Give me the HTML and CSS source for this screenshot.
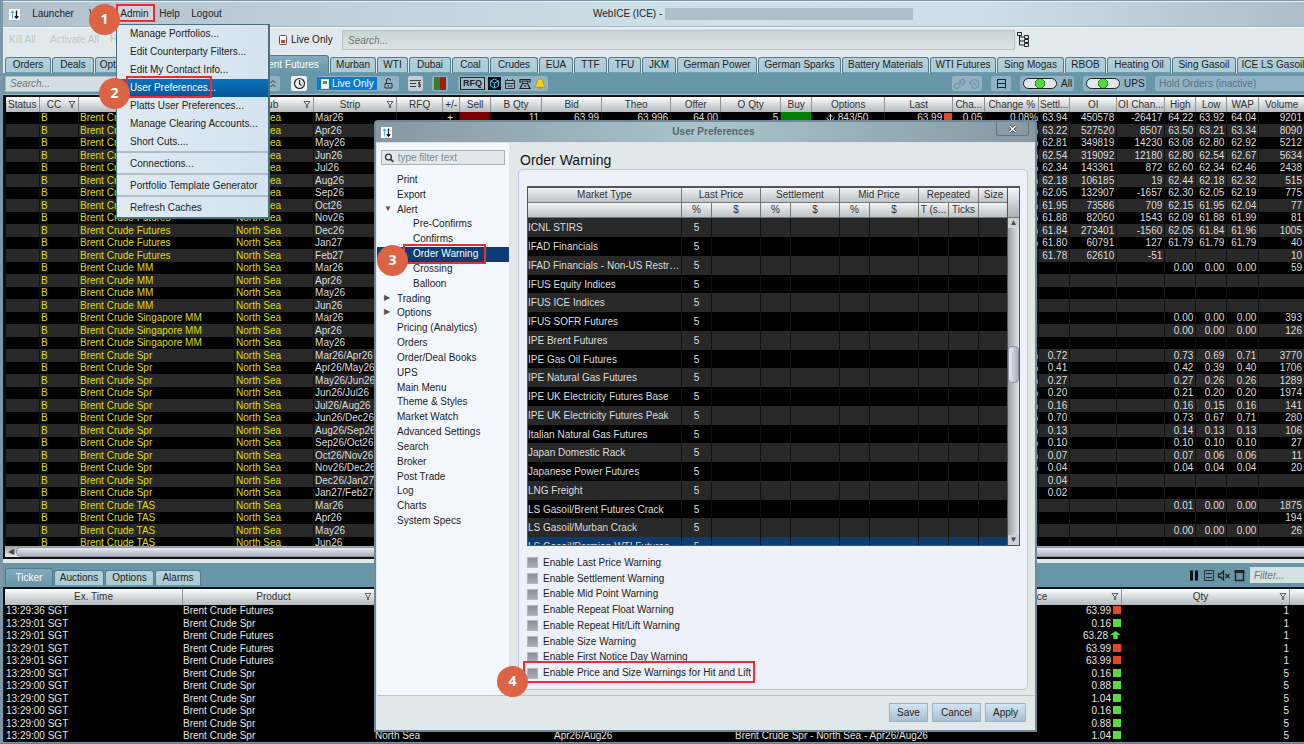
FILE: index.html
```html
<!DOCTYPE html>
<html lang="en">
<head>
<meta charset="utf-8">
<title>WebICE (ICE)</title>
<link rel="stylesheet" href="styles.css">
</head>
<body>
<svg class="defs" width="0" height="0" aria-hidden="true">
  <symbol id="funnel" viewBox="0 0 8 8"><path d="M1 1h6L4.600 4.200V7h-1.200V4.200z" fill="none" stroke="#444" stroke-width=".8"/></symbol>
  <symbol id="logo" viewBox="0 0 11 11"><path d="M0 0h11v11H0z" fill="#fff"/><path d="M3.500 9.500V2M1.800 3.800 3.500 2l1.700 1.800" stroke="#5fb4e4" stroke-width="1.200" fill="none"/><path d="M7.500 1.500V9M5.700 7.200 7.500 9l1.800-1.800" stroke="#111" stroke-width="1.300" fill="none"/></symbol>
</svg>
<div class="app">
  <header class="titlebar">
    <svg class="logo"><use href="#logo"/></svg>
    <nav class="menubar">
      <button>Launcher</button><button>View</button><button class="open">Admin</button><button>Help</button><button>Logout</button>
    </nav>
    <div class="apptitle">WebICE (ICE) - <span class="redacted"></span></div>
  </header>

  <div class="toolbar">
    <button class="ghost" disabled>Kill All</button>
    <button class="ghost" disabled>Activate All</button>
    <button class="ghost hold" disabled>Hold All</button>
    <button class="live"><svg width="8" height="11" viewBox="0 0 8 11"><rect x=".5" y=".5" width="7" height="9" rx="1" fill="#fff" stroke="#555"/><path d="M2 5h4v3H2z" fill="#e04030"/></svg>Live Only</button>
    <input class="search-main" type="text" placeholder="Search..." aria-label="Search">
    <svg class="hier" width="13" height="18" viewBox="0 0 13 18" fill="none" stroke="#222"><path d="M.5 1.500h4v3h-4zM7.500 4.500h4v3h-4zM7.500 8.500h4v3h-4zM7.500 12.500h4v3h-4zM2.500 4.500v9.500h5M2.500 6h5M2.500 10h5"/></svg>
  </div>

  <nav class="tabs main-tabs">
    <button>Orders</button><button>Deals</button><button>Options</button><span></span><button class="active">Brent Futures</button><button>Murban</button><button>WTI</button><button>Dubai</button><button>Coal</button><button>Crudes</button><button>EUA</button><button>TTF</button><button>TFU</button><button>JKM</button><button>German Power</button><button>German Sparks</button><button>Battery Materials</button><button>WTI Futures</button><button>Sing Mogas</button><button>RBOB</button><button>Heating Oil</button><button>Sing Gasoil</button><button>ICE LS Gasoil</button>
  </nav>

  <div class="band">
    <input class="search-grid" type="text" placeholder="Search..." aria-label="Search markets">
    <button class="chip up" aria-label="Collapse"><svg width="8" height="9" viewBox="0 0 8 9" fill="none" stroke="#333"><path d="M1.500 4 4 1.500 6.500 4M1.500 8 4 5.500 6.500 8"/></svg></button>
    <button class="chip clock" aria-label="History"><svg width="13" height="13" viewBox="0 0 13 13" fill="none" stroke="#222" stroke-width="1.200"><circle cx="6.500" cy="6.500" r="5"/><path d="M6.500 3v4l2 1.500"/></svg></button>
    <div class="chip livegroup">
      <button class="liveon"><svg width="8" height="10" viewBox="0 0 8 10"><rect x=".5" y=".5" width="7" height="9" fill="#fff" stroke="#dfe8df"/><path d="M2 2h4v3H2z" fill="#3fae3f"/></svg>Live Only</button>
      <button class="lock" aria-label="Lock"><svg width="9" height="11" viewBox="0 0 9 11" fill="none" stroke="#333"><path d="M1 5.500h7v4.500H1zM2.500 5V2.500a2 2 0 0 1 4 0M4.500 7v1.500"/></svg></button>
    </div>
    <button class="chip list" aria-label="Prices"><svg width="13" height="11" viewBox="0 0 13 11" fill="none" stroke="#444"><path d="M1 2.500h11M1 5.500h6M1 8.500h6"/><path d="M11.500 4.500H9.500v2h2v2H9M10.500 3.500v6" stroke-width=".9"/></svg></button>
    <button class="chip colours" aria-label="Colours"><span class="g"></span><span class="r"></span></button>
    <div class="chip tools">
      <button class="rfq">RFQ</button>
      <button aria-label="Block"><svg width="13" height="13" viewBox="0 0 13 13"><path d="M0 0h13v13H0z" fill="#0b0f14"/><path d="M6.500 2 10.500 4v5l-4 2.200L2.500 9V4zM2.500 4l4 2 4-2M6.500 6v5" fill="none" stroke="#35b8d8"/></svg></button>
      <button aria-label="Calendar"><svg width="12" height="12" viewBox="0 0 12 12" fill="none" stroke="#333"><path d="M1.500 2.500h9v8h-9zM1.500 5.500h9M3.500 1v2M8.500 1v2M3.500 8h5"/></svg></button>
      <button aria-label="Phone"><svg width="12" height="12" viewBox="0 0 12 12" fill="none" stroke="#222" stroke-width="1.200"><path d="M1 4V1.500h10V4H8.500V3h-5v1zM3.500 5.500h5l2.500 5H1zM4.500 8h3"/></svg></button>
      <button aria-label="Alerts"><svg width="12" height="12" viewBox="0 0 12 12"><path d="M6 1c-2.500 0-3.300 2-3.300 4.200C2.700 7.500 1 8 1 9.300h10C11 8 9.300 7.500 9.300 5.200 9.300 3 8.500 1 6 1z" fill="#f3cf22" stroke="#b38a10" stroke-width=".7"/><path d="M4.800 10.200h2.400" stroke="#b38a10" stroke-width="1.500"/></svg></button>
    </div>
    <div class="band-right">
      <div class="chip linkgroup"><svg width="28" height="12" viewBox="0 0 28 12" fill="none" stroke="#7890a0" stroke-width="1.200"><path d="M5 7 8.500 3.500M4.500 4.500 2 7a2 2 0 0 0 3 3l2-2M6 4l2-2a2 2 0 0 1 3 3L8.500 7.500M17 3v3h3M17.300 5.500A4.300 4.300 0 1 1 18 8.500M21.500 3.500V6.500l2 1"/></svg></div>
      <button class="chip split" aria-label="Split"><svg width="11" height="11" viewBox="0 0 11 11" fill="none" stroke="#222"><path d="M1.500 1v9.500M9.500 1v9.500M1.500 1.500h8M1.500 5.500h8M1.500 9.500h8"/></svg></button>
      <label class="chip toggle all"><input type="checkbox" checked><span class="track"></span>All</label>
      <label class="chip toggle ups"><input type="checkbox" checked><span class="track"></span>UPS</label>
      <select class="hold-orders" aria-label="Hold orders"><option>Hold Orders (inactive)</option></select>
    </div>
  </div>

  <main class="market">
    <table class="grid">
      <colgroup id="market-cols"></colgroup>
      <thead><tr><th>Status</th><th class="f">CC<svg><use href="#funnel"/></svg></th><th class="f">Product<svg><use href="#funnel"/></svg></th><th class="f">Hub<svg><use href="#funnel"/></svg></th><th class="f">Strip<svg><use href="#funnel"/></svg></th><th>RFQ</th><th>+/-</th><th>Sell</th><th>B Qty</th><th>Bid</th><th>Theo</th><th>Offer</th><th>O Qty</th><th>Buy</th><th>Options</th><th>Last</th><th>Cha...</th><th>Change %</th><th>Settl...</th><th>OI</th><th>OI Chan...</th><th>High</th><th>Low</th><th>WAP</th><th>Volume</th></tr></thead>
      <tbody id="market-rows"></tbody>
    </table>
  </main>
  <div class="hscroll"><span class="arrow">◀</span><span class="thumb"></span></div>

  <section class="ticker">
    <div class="ticker-head">
      <nav class="tabs ticker-tabs"><button class="active">Ticker</button><button>Auctions</button><button>Options</button><button>Alarms</button></nav>
      <div class="ticker-tools">
        <svg width="57" height="13" viewBox="0 0 57 13" fill="none" stroke="#222"><path d="M0 1.500h3v10H0zM5 1.500h3v10H5z" fill="#111" stroke="none"/><path d="M14.500 1.500h9v10h-9zM16 4.500h6M16 8.500h6" stroke-width=".9"/><path d="M28.500 5h2l3-3v9l-3-3h-2zM35.500 5l4 4M39.500 5l-4 4" stroke-width="1.300"/><path d="M45.500 3v8.500h8V3" stroke-width="1.500"/><path d="M44.500 2.500h10" stroke-width="3"/></svg>
        <input type="text" placeholder="Filter..." aria-label="Filter">
      </div>
    </div>
    <table class="grid ticks">
      <colgroup><col class="t1"><col class="t2"><col class="t3"><col class="t4"><col class="t5"><col class="t6"><col class="t7"><col></colgroup>
      <thead><tr><th>Ex. Time</th><th class="f">Product<svg><use href="#funnel"/></svg></th><th>Hub</th><th>Strip</th><th>Contract</th><th class="f">Price<svg><use href="#funnel"/></svg></th><th class="f">Qty<svg><use href="#funnel"/></svg></th><th></th></tr></thead>
      <tbody id="tick-rows"></tbody>
    </table>
  </section>
</div>

<ul class="menu" role="menu">
  <li><button>Manage Portfolios...</button></li>
  <li><button>Edit Counterparty Filters...</button></li>
  <li><button>Edit My Contact Info...</button></li>
  <li><button class="selected">User Preferences...</button></li>
  <li><button>Platts User Preferences...</button></li>
  <li><button>Manage Clearing Accounts...</button></li>
  <li><button>Short Cuts....</button></li>
  <li class="sep"><button>Connections...</button></li>
  <li class="sep"><button>Portfolio Template Generator</button></li>
  <li class="sep"><button>Refresh Caches</button></li>
</ul>

<section class="dialog" role="dialog" aria-label="User Preferences">
  <header class="dialog-title"><svg class="logo"><use href="#logo"/></svg><h1>User Preferences</h1><button class="close" aria-label="Close"><svg width="9" height="8" viewBox="0 0 9 8"><path d="M1.500 1l6 6M7.500 1l-6 6" stroke="#333" stroke-width="3"/><path d="M1.500 1l6 6M7.500 1l-6 6" stroke="#fff" stroke-width="1.600"/></svg></button></header>
  <div class="dialog-body">
    <aside class="side">
      <div class="filter"><svg width="12" height="12" viewBox="0 0 12 12" fill="none" stroke="#333"><circle cx="5" cy="5" r="3.300" stroke-width="1.500"/><path d="m7.500 7.500 3 3" stroke-width="2"/></svg><input type="text" placeholder="type filter text" aria-label="Filter preferences"></div>
      <ul class="tree">
        <li>Print</li><li>Export</li><li class="expanded">Alert</li><li class="sub">Pre-Confirms</li><li class="sub">Confirms</li><li class="sub current">Order Warning</li><li class="sub">Crossing</li><li class="sub">Balloon</li><li class="collapsed">Trading</li><li class="collapsed">Options</li><li>Pricing (Analytics)</li><li>Orders</li><li>Order/Deal Books</li><li>UPS</li><li>Main Menu</li><li>Theme &amp; Styles</li><li>Market Watch</li><li>Advanced Settings</li><li>Search</li><li>Broker</li><li>Post Trade</li><li>Log</li><li>Charts</li><li>System Specs</li>
      </ul>
    </aside>
    <div class="content">
      <h2>Order Warning</h2>
      <div class="panel">
        <div class="warn">
          <div class="warn-view">
            <table>
              <colgroup><col class="w-name"><col class="w-p"><col class="w-d"><col class="w-p"><col class="w-d"><col class="w-p"><col class="w-d"><col class="w-p"><col class="w-p"><col class="w-p"></colgroup>
              <thead>
                <tr><th>Market Type</th><th colspan="2">Last Price</th><th colspan="2">Settlement</th><th colspan="2">Mid Price</th><th colspan="2">Repeated</th><th>Size</th></tr>
                <tr><th></th><th>%</th><th>$</th><th>%</th><th>$</th><th>%</th><th>$</th><th>T (s...</th><th>Ticks</th><th></th></tr>
              </thead>
              <tbody id="warn-rows"></tbody>
            </table>
          </div>
          <div class="vscroll"><span class="cap"></span><span class="btn">▲</span><span class="rail"><span class="grip"></span></span><span class="btn">▼</span></div>
        </div>
        <div class="checks">
          <label><input type="checkbox">Enable Last Price Warning</label>
          <label><input type="checkbox">Enable Settlement Warning</label>
          <label><input type="checkbox">Enable Mid Point Warning</label>
          <label><input type="checkbox">Enable Repeat Float Warning</label>
          <label><input type="checkbox">Enable Repeat Hit/Lift Warning</label>
          <label><input type="checkbox">Enable Size Warning</label>
          <label><input type="checkbox">Enable First Notice Day Warning</label>
          <label><input type="checkbox">Enable Price and Size Warnings for Hit and Lift</label>
        </div>
      </div>
    </div>
  </div>
  <footer class="dialog-foot"><button class="save">Save</button><button class="cancel">Cancel</button><button class="apply">Apply</button></footer>
</section>

<div class="mark m1"></div><div class="pin p1">1</div>
<div class="mark m2"></div><div class="pin p2">2</div>
<div class="mark m3"></div><div class="pin p3">3</div>
<div class="mark m4"></div><div class="pin p4">4</div>
<script src="app.js"></script>
</body>
</html>
```

FILE: styles.css
```css
* { box-sizing: border-box; }
html, body { height: 100%; }
body { margin: 0; overflow: hidden; background: #7d96a8; color: #222; font: 10px/12px "Liberation Sans", Arial, sans-serif; position: relative; }
button, input, select { font: inherit; color: inherit; margin: 0; padding: 0; border: 0; background: none; }
button { white-space: nowrap; text-align: center; }
input::placeholder { color: #6d7676; font-style: italic; opacity: 1; }
ul { list-style: none; margin: 0; padding: 0; }
h1, h2 { margin: 0; font-weight: normal; }
table { border-collapse: collapse; table-layout: fixed; width: 100%; }
th, td { padding: 0; font-weight: normal; overflow: hidden; white-space: nowrap; }
.defs { position: absolute; }
.logo { width: 11px; height: 11px; flex: none; }

.app { height: 100%; display: flex; flex-direction: column; padding: 1px 0 1px 3px; border-bottom: 1px solid #777; }
.app > * { flex: none; }

.titlebar { height: 26px; display: flex; align-items: center; padding-left: 6px; border-top: 1px solid #e8f2f6; border-bottom: 1px solid #a3b5bf; background: linear-gradient(90deg, #b1bfca 0, #bccdd7 20%, #cfe2ea 55%, #cde0e9 75%, #adbdc9 100%); }
.menubar { display: grid; grid-template-columns: 54px 36px 37px 33px 41px; padding-left: 6px; }
.menubar button { height: 18px; text-align: center; }
.menubar button:nth-child(2) { text-align: left; padding-left: 9px; }
.menubar .open { background: #ccd5da; }
.apptitle { flex: 1; padding-left: 366px; display: flex; align-items: center; gap: 3px; white-space: nowrap; }
.redacted { width: 248px; height: 12px; background: #adc0ca; }

.toolbar { height: 29px; display: flex; align-items: center; padding: 0 0 4px 6px; background: #e2e9ec; border-top: 1px solid #f2f6f8; }
.ghost { width: 41px; color: #bfc6c8; text-align: left; }
.ghost:nth-child(2) { width: 60px; }
.hold { width: 169px; }
.live { display: flex; align-items: center; gap: 4px; width: 60px; }
.search-main { flex: 1; margin-left: 3px; height: 20px; padding: 0 5px; border: 1px solid #b5bfc9; background: linear-gradient(#c9d4d4, #dce5e3); }
.hier { width: 13px; margin: 0 274px 0 2px; }

.tabs { display: grid; gap: 1px; align-items: end; }
.tabs button { height: 16px; overflow: hidden; background: linear-gradient(#b5d1da, #a9cad5); border: 1px solid #547c8d; border-bottom-color: #6f9dae; border-radius: 3px 3px 0 0; }
.tabs .active { height: 18px; background: linear-gradient(#82abba, #6797a9); color: #fff; border-bottom: 0; }
.main-tabs { margin-top: -1px; padding-left: 2px; background: #e2e9ec; grid-template-columns: 46px 42px 44px 107px 81px 46px 31px 42px 37px 48px 34px 33px 33px 34px 80px 83px 87px 66px 67px 41px 64px 64px minmax(72px, 1fr); }

.band { height: 22px; display: flex; align-items: center; padding-left: 2px; background: #6696a8; border-bottom: 1px solid #9fc0cc; }
.band svg { display: block; }
.search-grid { width: 261px; height: 16px; padding: 0 4px; border: 1px solid #afbcc4; background: #d3dfe1; }
.chip { display: flex; align-items: center; justify-content: center; height: 15px; border-radius: 2px; background: #8fb2c5; }
.up { width: 14px; }
.clock { width: 16px; margin-left: 11px; background: #eef2f4; }
.livegroup { margin-left: 10px; width: 82px; justify-content: flex-start; }
.liveon { display: flex; align-items: center; gap: 3px; height: 13px; width: 60px; padding-left: 4px; background: #0b7ad0; color: #fff; }
.lock { padding-left: 7px; }
.list { width: 15px; margin-left: 9px; background: #c3d1d6; }
.colours { width: 16px; margin-left: 9px; }
.colours span { width: 6px; height: 13px; }
.g { background: #3b7d22; }
.r { background: #a01c12; }
.tools { width: 90px; margin-left: 10px; gap: 3px; }
.rfq { width: 25px; height: 13px; border: 1px solid #222; line-height: 11px; font-size: 9px; font-weight: bold; background: #9fbac6; }
.band-right { display: flex; flex: 1; justify-content: flex-end; gap: 9px; }
.linkgroup { width: 30px; }
.split { width: 20px; }
.toggle { justify-content: flex-start; gap: 4px; padding-left: 3px; }
.all { width: 54px; }
.ups { width: 63px; }
.toggle input { position: absolute; opacity: 0; }
.track { width: 34px; height: 11px; border: 1px solid #222; border-radius: 6px; background: radial-gradient(circle 5px at 50% 50%, #4fd93c 0 4px, #245c22 5px, #dfe8ea 5px); }
.hold-orders { width: 149px; height: 15px; padding-left: 4px; background: #8fb2c5; color: #5d7280; border-radius: 2px 0 0 2px; appearance: none; }

.market { flex: 1; min-height: 0; overflow: hidden; background: #000; border-top: 2px solid #111; border-left: 2px solid #111; }
.grid th { height: 15px; position: relative; background: linear-gradient(#fdfdfd, #cfd3d5 60%, #b4bbbf); color: #333; border-left: 1px solid #8d9498; line-height: 14px; }
.grid th:first-child { border-left: 0; }
.grid th svg { position: absolute; right: 2px; top: 3px; width: 8px; height: 9px; }
.grid .f { padding-right: 10px; }
.grid td { height: 12px; line-height: 12px; color: #ddd; }
.grid tr:nth-child(even) td { height: 13px; }
.market td { text-align: right; padding-right: 2px; border-left: 1px solid #111; }
.market tbody tr:nth-child(even) { background: #282828; }
.market td:nth-child(-n+5) { text-align: left; padding: 0 0 0 1px; }
.market td:nth-child(2), .market td:nth-child(3), .market td:nth-child(4) { color: #dede00; }
.market td:nth-child(16), .market td:nth-child(18) { padding-right: 0; }
.market td:nth-child(7), .market td:nth-child(15) { text-align: center; }
.sell { background: #7c0000; }
.buy { background: #008000; }
.sq { display: inline-block; width: 8px; height: 8px; margin-left: 2px; background: #57db43; }
.sq.red { background: #e5452b; }
.sq.arrow { clip-path: polygon(50% 0, 100% 50%, 70% 50%, 70% 100%, 30% 100%, 30% 50%, 0 50%); }

.hscroll { height: 13px; display: flex; align-items: center; border: 1px solid #111; border-width: 0 0 2px 2px; background: linear-gradient(#9ca3a9, #e6e9ec); }
.arrow { width: 11px; font-size: 8px; text-align: center; color: #444; }
.hscroll .thumb { flex: 1; height: 10px; border: 1px solid #8f98a2; border-right: 0; border-radius: 6px 0 0 6px; background: linear-gradient(#e8ebf2, #a9aebb); }

.ticker { background: #000; border-top: 4px solid #dfe8eb; }
.ticker-head { height: 24px; display: flex; justify-content: space-between; align-items: flex-end; padding: 0 0 1px 2px; background: #6696a8; }
.ticker-tabs { grid-template-columns: 48px 50px 49px 46px; }
.ticker-tools { display: flex; align-items: center; gap: 3px; padding-bottom: 3px; }
.ticker-tools input { width: 54px; height: 16px; padding-left: 4px; background: #d5e0e1; }
.ticks { border-top: 2px solid #111; border-left: 2px solid #111; border-collapse: separate; border-spacing: 0; }
.ticks th { height: 16px; }
.t1 { width: 177px; } .t2 { width: 192px; } .t3 { width: 179px; } .t4 { width: 181px; } .t5 { width: 226px; } .t6 { width: 161px; } .t7 { width: 168px; }
.ticks td { padding-left: 1px; color: #e4e4e4; }
.ticks td:nth-child(6), .ticks td:nth-child(7) { text-align: right; }

.menu { position: absolute; left: 116px; top: 24px; width: 154px; border: 1px solid #4c7082; border-width: 1px 2px 2px 1px; background: linear-gradient(90deg, #dfeaf2, #d3e3f0); }
.menu button { display: block; width: 100%; height: 18px; padding-left: 13px; text-align: left; }
.menu .selected { background: linear-gradient(#0a72bd, #065596); color: #fff; }
.sep { border-top: 2px solid #b5bcc2; padding-top: 2px; }

.dialog { position: absolute; left: 374px; top: 120px; right: 267px; bottom: 12px; display: flex; flex-direction: column; border: 2px solid #71889b; border-radius: 4px 4px 0 0; background: #e1e8ea; }
.dialog-title { flex: none; height: 21px; display: flex; align-items: center; padding-left: 5px; background: linear-gradient(90deg, #8798a3, #a9c5cb 50%, #8798a3); border-bottom: 1px solid #d9e3e6; position: relative; }
.dialog-title h1 { flex: 1; text-align: center; font-size: 10px; font-weight: bold; color: #59666c; }
.close { position: absolute; right: 6px; top: 0; width: 33px; height: 14px; border: 1px solid #66747c; border-top: 0; border-radius: 0 0 3px 3px; }
.close svg { display: block; margin: auto; }
.dialog-body { flex: 1; min-height: 0; display: flex; margin-left: 1px; border-bottom: 1px solid #b9c3cc; }
.side { width: 132px; background: #f3f8fe; }
.filter { display: flex; align-items: center; gap: 3px; height: 15px; margin: 7px 4px 8px 4px; padding-left: 2px; border: 1px solid #a8b2ba; background: #e0e8ea; }
.filter input { width: 100%; }
.filter input::placeholder { font-style: normal; color: #808a90; }
.tree { display: grid; grid-auto-rows: 1fr; height: 356px; line-height: 14px; }
.tree li { padding-left: 20px; position: relative; }
.tree .sub { padding-left: 36px; }
.tree .current { background: #0b3d73; color: #fff; }
.tree .expanded::before, .tree .collapsed::before { position: absolute; left: 7px; top: -1px; font-size: 8px; color: #555; content: "▼"; }
.tree .collapsed::before { content: "▶"; }
.content { flex: 1; min-width: 0; display: flex; flex-direction: column; padding: 8px 7px 5px 9px; }
.content h2 { font-size: 14px; line-height: 18px; padding-left: 2px; color: #111; }
.panel { flex: 1; min-height: 0; display: flex; flex-direction: column; padding: 16px 7px 8px 8px; border: 1px solid #c0c9d8; border-radius: 5px; background: #edf1f9; }
.warn { flex: 1; min-height: 0; display: flex; border: 1px solid #555; border-top-width: 2px; background: #000; }
.warn-view { flex: 1; min-width: 0; overflow: hidden; }
.w-name { width: 154px; } .w-p { width: 30px; } .w-d { width: 49px; }
.warn table { border-collapse: separate; border-spacing: 0; }
.warn th { height: 15px; background: linear-gradient(#f1f3f4, #bcc2c6); color: #333; border: 1px solid #777; border-width: 0 1px 1px 0; line-height: 14px; }
.warn td { height: 19px; text-align: center; color: #ddd; border-right: 1px solid #111; line-height: 17px; }
.warn tr:nth-child(4n) td { height: 18px; }
.warn td:first-child { text-align: left; text-overflow: ellipsis; }
.warn tbody tr:nth-child(odd) { background: #282828; }
.warn tbody tr.picked { background: #0b3d73; }
.picked td { line-height: 14px; }
.vscroll { width: 12px; display: flex; flex-direction: column; background: #b7bcc0; border-left: 1px solid #555; }
.cap { height: 30px; background: linear-gradient(#f5f6f7, #a9afb3); border-bottom: 1px solid #777; }
.btn { height: 10px; font-size: 8px; line-height: 10px; text-align: center; color: #444; background: #ccd0d2; }
.rail { flex: 1; background: linear-gradient(90deg, #999fa4, #e3e6e8); display: flex; flex-direction: column; }
.grip { height: 37px; margin-top: 118px; border: 1px solid #8d95a6; border-radius: 4px; background: linear-gradient(90deg, #e6e9f3, #a8adbf); }
.checks { flex: none; display: grid; grid-auto-rows: 1fr; height: 126px; margin-top: 9px; }
.checks label { display: flex; align-items: center; gap: 5px; }
.checks input { appearance: none; width: 11px; height: 11px; border: 1px solid #b3b7c0; background: linear-gradient(#8b8f99, #a9adb6); }
.dialog-foot { flex: none; height: 34px; display: flex; justify-content: flex-end; gap: 4px; padding: 7px 9px 0 0; }
.dialog-foot button { height: 19px; border: 1px solid #a6b0b8; background: linear-gradient(#d2e5f2, #a9bfcf); }
.save { width: 39px; } .cancel { width: 49px; } .apply { width: 41px; }

.mark { position: absolute; border: 2px solid #ee2b33; pointer-events: none; }
.m1 { left: 116px; top: 4px; width: 39px; height: 18px; }
.m2 { left: 126px; top: 76px; width: 86px; height: 22px; }
.m3 { left: 403px; top: 244px; width: 83px; height: 20px; }
.m4 { left: 523px; top: 661px; width: 232px; height: 22px; }
.pin { position: absolute; width: 31px; height: 31px; border-radius: 50%; background: #da6444; color: #fff; font-family: "Open Sans", sans-serif; font-weight: bold; font-size: 14px; line-height: 30px; text-align: center; }
.p1 { left: 89px; top: 4px; } .p2 { left: 99px; top: 78px; } .p3 { left: 377px; top: 245px; } .p4 { left: 497px; top: 666px; }
```

FILE: app.js
```js
const widths = [34, 39, 156, 79, 83, 46, 17, 31, 51, 60, 69, 50, 60, 31, 73, 68, 32, 54, 31, 47, 48, 31, 31, 32, 45];
document.getElementById('market-cols').innerHTML = widths.map(w => `<col style="width:${w}px">`).join('');

// product, strip, has change %, settle, OI, OI change, high, low, WAP, volume
const F = 'Brent Crude Futures', M = 'Brent Crude MM', G = 'Brent Crude Singapore MM', S = 'Brent Crude Spr', T = 'Brent Crude TAS';
const market = [
  [F, 'Mar26', 1, '63.94', '450578', '-26417', '64.22', '63.92', '64.04', '9201'],
  [F, 'Apr26', 1, '63.22', '527520', '8507', '63.50', '63.21', '63.34', '8090'],
  [F, 'May26', 1, '62.81', '349819', '14230', '63.08', '62.80', '62.92', '5212'],
  [F, 'Jun26', 1, '62.54', '319092', '12180', '62.80', '62.54', '62.67', '5634'],
  [F, 'Jul26', 1, '62.34', '143361', '872', '62.60', '62.34', '62.46', '2438'],
  [F, 'Aug26', 1, '62.18', '106185', '19', '62.44', '62.18', '62.32', '515'],
  [F, 'Sep26', 1, '62.05', '132907', '-1657', '62.30', '62.05', '62.19', '775'],
  [F, 'Oct26', 1, '61.95', '73586', '709', '62.15', '61.95', '62.04', '77'],
  [F, 'Nov26', 1, '61.88', '82050', '1543', '62.09', '61.88', '61.99', '81'],
  [F, 'Dec26', 1, '61.84', '273401', '-1560', '62.05', '61.84', '61.96', '1005'],
  [F, 'Jan27', 1, '61.80', '60791', '127', '61.79', '61.79', '61.79', '40'],
  [F, 'Feb27', 0, '61.78', '62610', '-51', '', '', '', '10'],
  [M, 'Mar26', 0, '', '', '', '0.00', '0.00', '0.00', '59'],
  [M, 'Apr26'], [M, 'May26'], [M, 'Jun26'],
  [G, 'Mar26', 0, '', '', '', '0.00', '0.00', '0.00', '393'],
  [G, 'Apr26', 0, '', '', '', '0.00', '0.00', '0.00', '126'],
  [G, 'May26'],
  [S, 'Mar26/Apr26', 1, '0.72', '', '', '0.73', '0.69', '0.71', '3770'],
  [S, 'Apr26/May26', 1, '0.41', '', '', '0.42', '0.39', '0.40', '1706'],
  [S, 'May26/Jun26', 1, '0.27', '', '', '0.27', '0.26', '0.26', '1289'],
  [S, 'Jun26/Jul26', 1, '0.20', '', '', '0.21', '0.20', '0.20', '1974'],
  [S, 'Jul26/Aug26', 1, '0.16', '', '', '0.16', '0.15', '0.16', '141'],
  [S, 'Jun26/Dec26', 1, '0.70', '', '', '0.73', '0.67', '0.71', '280'],
  [S, 'Aug26/Sep26', 1, '0.13', '', '', '0.14', '0.13', '0.13', '106'],
  [S, 'Sep26/Oct26', 1, '0.10', '', '', '0.10', '0.10', '0.10', '27'],
  [S, 'Oct26/Nov26', 1, '0.07', '', '', '0.07', '0.06', '0.06', '11'],
  [S, 'Nov26/Dec26', 1, '0.04', '', '', '0.04', '0.04', '0.04', '20'],
  [S, 'Dec26/Jan27', 0, '0.04'],
  [S, 'Jan27/Feb27', 0, '0.02'],
  [T, 'Mar26', 0, '', '', '', '0.01', '0.00', '0.00', '1875'],
  [T, 'Apr26', 0, '', '', '', '', '', '', '194'],
  [T, 'May26', 0, '', '', '', '0.00', '0.00', '0.00', '26'],
  [T, 'Jun26']
];
const anchor = '<svg width="9" height="8" viewBox="0 0 9 8" fill="none" stroke="#ddd"><path d="M4.500 1v6.500M2.500 3h4M1 4.500c0 2 1.500 3 3.500 3s3.500-1 3.500-3"/></svg>';
const quote = ['', '+', '', '11', '63.99', '63.996', '64.00', '5', '', anchor + ' 843/50', '63.99<span class="sq red"></span>', '0.05', '0.08%'];
document.getElementById('market-rows').innerHTML = market.map((r, i) => {
  const mid = i === 0 ? quote : quote.map((_, k) => k === 12 && r[2] ? '%' : '');
  const tail = Array.from({ length: 7 }, (_, k) => r[3 + k] || '');
  const cells = ['', 'B', r[0], 'North Sea', r[1], ...mid, ...tail];
  return '<tr>' + cells.map((c, k) => {
    const cls = i === 0 && k === 7 ? ' class="sell"' : i === 0 && k === 13 ? ' class="buy"' : '';
    return `<td${cls}>${c}</td>`;
  }).join('') + '</tr>';
}).join('');

const ticks = [
  ['36', F, '63.99', 'red', 1], ['01', S, '0.16', '', 1], ['01', F, '63.28', 'arrow', 1], ['01', F, '63.99', 'red', 1],
  ['01', F, '63.99', 'red', 1], ['00', S, '0.16', '', 5], ['00', S, '0.88', '', 5], ['00', S, '1.04', '', 5],
  ['00', S, '0.16', '', 5], ['00', S, '0.88', '', 5], ['00', S, '1.04', '', 5, 'North Sea', 'Apr26/Aug26', 'Brent Crude Spr - North Sea - Apr26/Aug26']
];
document.getElementById('tick-rows').innerHTML = ticks.map(t =>
  `<tr><td>13:29:${t[0]} SGT</td><td>${t[1]}</td><td>${t[5] || ''}</td><td>${t[6] || ''}</td><td>${t[7] || ''}</td><td>${t[2]}<span class="sq ${t[3]}"></span></td><td>${t[4]}</td><td></td></tr>`
).join('');

const types = ['ICNL STIRS', 'IFAD Financials', 'IFAD Financials - Non-US Restricted', 'IFUS Equity Indices', 'IFUS ICE Indices', 'IFUS SOFR Futures', 'IPE Brent Futures', 'IPE Gas Oil Futures', 'IPE Natural Gas Futures', 'IPE UK Electricity Futures Base', 'IPE UK Electricity Futures Peak', 'Italian Natural Gas Futures', 'Japan Domestic Rack', 'Japanese Power Futures', 'LNG Freight', 'LS Gasoil/Brent Futures Crack', 'LS Gasoil/Murban Crack', 'LS Gasoil/Permian WTI Futures Crack'];
document.getElementById('warn-rows').innerHTML = types.map((t, i) =>
  `<tr${i === types.length - 1 ? ' class="picked"' : ''}><td>${t}</td><td>5</td>${'<td></td>'.repeat(8)}</tr>`
).join('');
```
